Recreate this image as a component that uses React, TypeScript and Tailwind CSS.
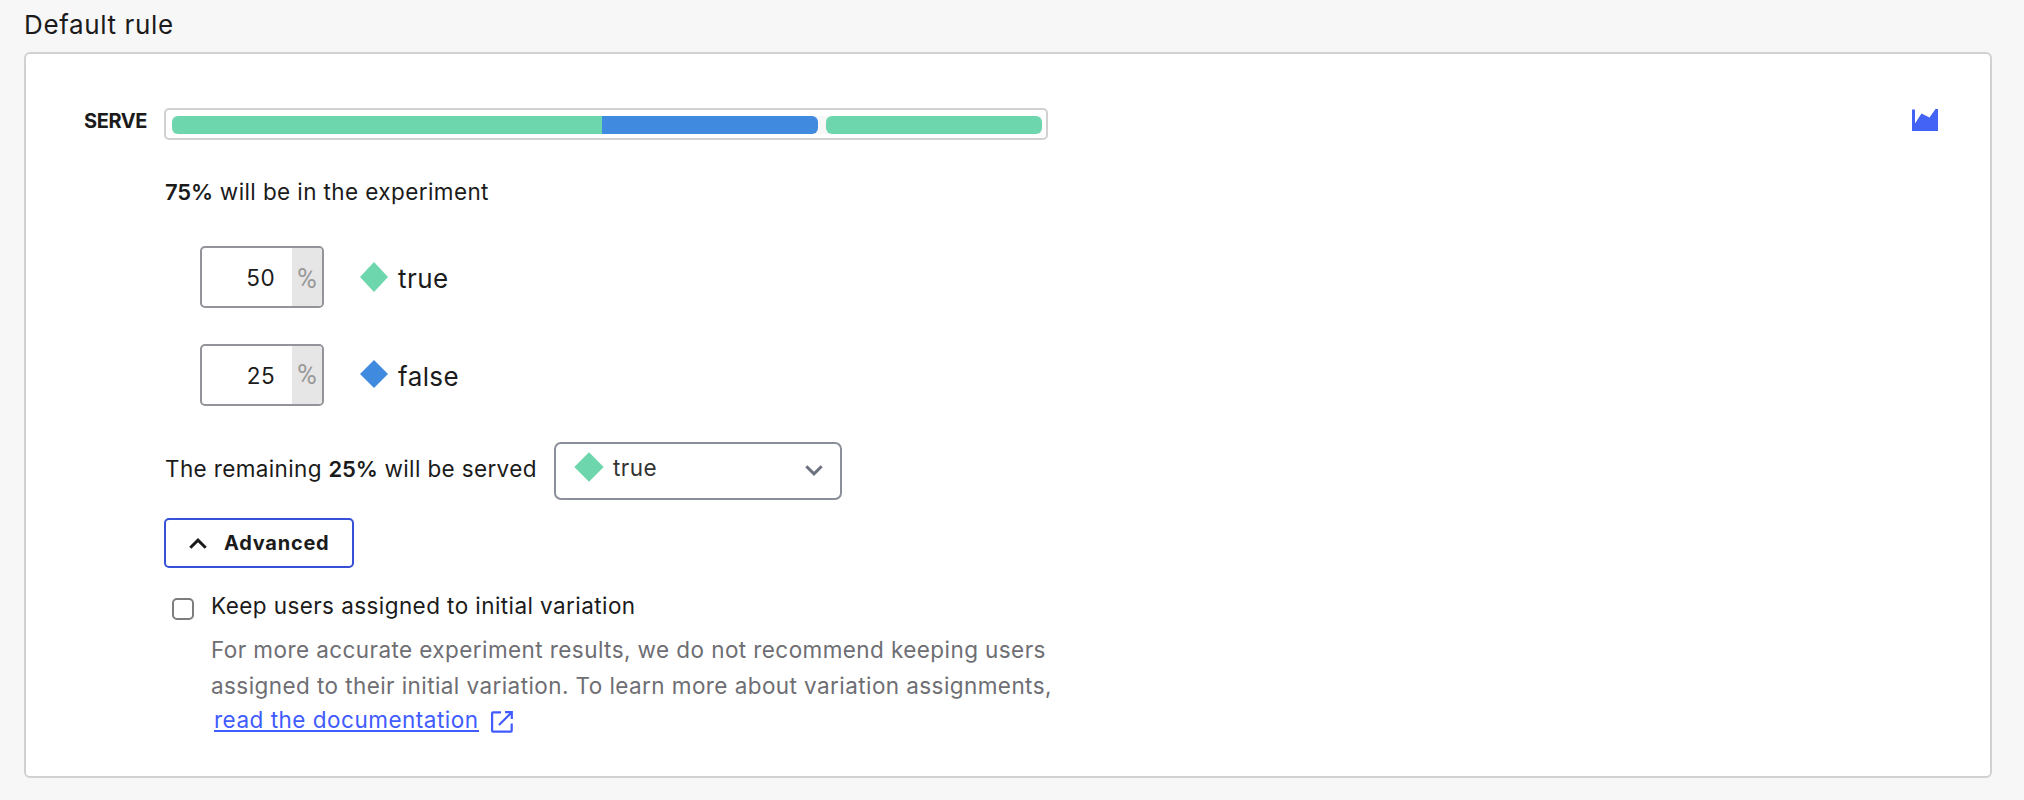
type Variation = { name: string; color: string; percent: number; diamond: string; unitClass: string };

const GREEN = "#6dd6ad";
const BLUE = "#408ae0";

const variations: Variation[] = [
  { name: "true", color: GREEN, percent: 50, diamond: "14,0 28,15 14,30 0,15", unitClass: "pt-[9px]" },
  { name: "false", color: BLUE, percent: 25, diamond: "14,0 28,14 14,28 0,14", unitClass: "pt-[7px]" },
];

function AreaChartIcon() {
  return (
    <svg width="26" height="22" viewBox="0 0 26 22" fill="#4363f7">
      <path d="M0 0.5H3V14.5L9.5 4.5L17.5 8.5L23.5 0H26V22H0Z" />
    </svg>
  );
}

function ExternalIcon() {
  return (
    <svg width="22" height="22" viewBox="0 0 22 22" fill="none" stroke="#405bff" strokeWidth="2.2">
      <path d="M10 1.3H2.1C1.5 1.3 1.1 1.7 1.1 2.3V19.7C1.1 20.3 1.5 20.7 2.1 20.7H19.7C20.3 20.7 20.7 20.3 20.7 19.7V12.5" />
      <path d="M14 1.2H20.8V8M20.5 1.5L8 14" />
    </svg>
  );
}

function PercentInput({ value, unitClass }: { value: number; unitClass: string }) {
  return (
    <div className="flex h-[62px] w-[124px] overflow-hidden rounded-[5px] border-2 border-[#939399] bg-white">
      <div className="flex-1 pt-[8px] pr-[17px] text-right leading-[44px]">{value}</div>
      <div
        className={`w-[30px] bg-[#e6e6e6] text-center font-['Roboto',sans-serif] text-[27px] leading-[44px] tracking-normal text-[#999] ${unitClass}`}
      >
        %
      </div>
    </div>
  );
}

function Strong({ children }: { children: string }) {
  return <b className="text-[22px] font-semibold tracking-[-0.1px]">{children}</b>;
}

export default function App() {
  return (
    <div className="h-[800px] w-[2024px] overflow-hidden bg-[#f7f7f7] pl-6 font-['Inter',sans-serif] text-[22.5px] tracking-[0.42px] text-[#1b1b1b]">
      <h2 className="h-[52px] text-[26px] leading-[49px] tracking-[0.62px]">Default rule</h2>

      <section className="flex h-[726px] w-[1968px] rounded-md border-2 border-[#d1d1d1] bg-white pt-[54px]">
        <div className="w-[138px] pl-[58px] text-[20px] leading-[26px] font-bold tracking-[-0.4px]">SERVE</div>

        <div className="w-[884px]">
          <div className="h-8 rounded-[5px] border-2 border-[#d1d1d1] py-[6px] pr-1 pl-[6px]">
            <div className="flex h-[18px] gap-2 bg-[#f7f7f7]">
              <div className="flex w-[646px] overflow-hidden rounded-md">
                <div className="w-[430px] bg-[#6dd6ad]" />
                <div className="flex-1 bg-[#408ae0]" />
              </div>
              <div className="flex-1 rounded-md bg-[#6dd6ad]" />
            </div>
          </div>

          <p className="mt-9 h-8 pl-px leading-8 tracking-[0.4px]">
            <Strong>75%</Strong> will be in the experiment
          </p>

          <div className="mt-[38px] flex flex-col gap-9 pl-9">
            {variations.map((v) => (
              <div key={v.name} className="flex h-[62px]">
                <PercentInput value={v.percent} unitClass={v.unitClass} />
                <svg className="mt-4 ml-9" width="28" height="30" viewBox="0 0 28 30">
                  <polygon points={v.diamond} fill={v.color} />
                </svg>
                <span className="ml-[10px] pt-[11px] text-[26px] leading-[44px]">{v.name}</span>
              </div>
            ))}
          </div>

          <div className="mt-9 flex h-[58px]">
            <p className="w-[390px] pt-[11px] pl-px leading-[32px] tracking-[0.36px] whitespace-nowrap">
              The remaining <Strong>25%</Strong> will be served
            </p>
            <div className="flex w-[288px] rounded-[7px] border-2 border-[#8b8f9a] bg-white">
              <svg className="mt-2 ml-[18px]" width="30" height="30" viewBox="0 0 30 30">
                <polygon points="15,0.3 29.7,15 15,29.7 0.3,15" fill={GREEN} />
              </svg>
              <span className="ml-[9px] flex-1 pt-[8px] leading-[32px] text-[#333]">true</span>
              <svg className="mt-[21px] mr-[17px]" width="18" height="11" viewBox="0 0 18 11" fill="none" stroke="#6c727f" strokeWidth="3">
                <path d="M1.3 1.3L9 8.8L16.7 1.3" />
              </svg>
            </div>
          </div>

          <button className="mt-[18px] flex h-[50px] w-[190px] rounded-[5px] border-2 border-[#3751d6] bg-white">
            <svg className="mt-[18px] ml-[23px]" width="18" height="11" viewBox="0 0 18 11" fill="none" stroke="#1b1b1b" strokeWidth="3">
              <path d="M1.3 9.8L9 2.2L16.7 9.8" />
            </svg>
            <span className="ml-[17px] text-[20px] leading-[47px] font-bold tracking-[0.75px]">Advanced</span>
          </button>

          <div className="mt-[20px] flex pl-2">
            <span className="mt-[10px] h-[22px] w-[22px] shrink-0 rounded-[5px] border-2 border-[#7d7d7d] bg-white" />
            <div className="ml-[17px] leading-9 whitespace-nowrap">
              <p>Keep users assigned to initial variation</p>
              <p className="mt-2 text-[#6e6e73]">
                For more accurate experiment results, we do not recommend keeping users
                <br />
                assigned to their initial variation. To learn more about variation assignments,
              </p>
              <a className="flex pl-[3px] text-[#405bff]">
                <span className="mr-3 h-[28px] border-b-2 border-[#405bff] leading-[32px] tracking-[0.5px]">read the documentation</span>
                <span className="pt-[7px]">
                  <ExternalIcon />
                </span>
              </a>
            </div>
          </div>
        </div>

        <div className="flex-1" />
        <div className="pt-[1px] pr-[52px]">
          <AreaChartIcon />
        </div>
      </section>
    </div>
  );
}
